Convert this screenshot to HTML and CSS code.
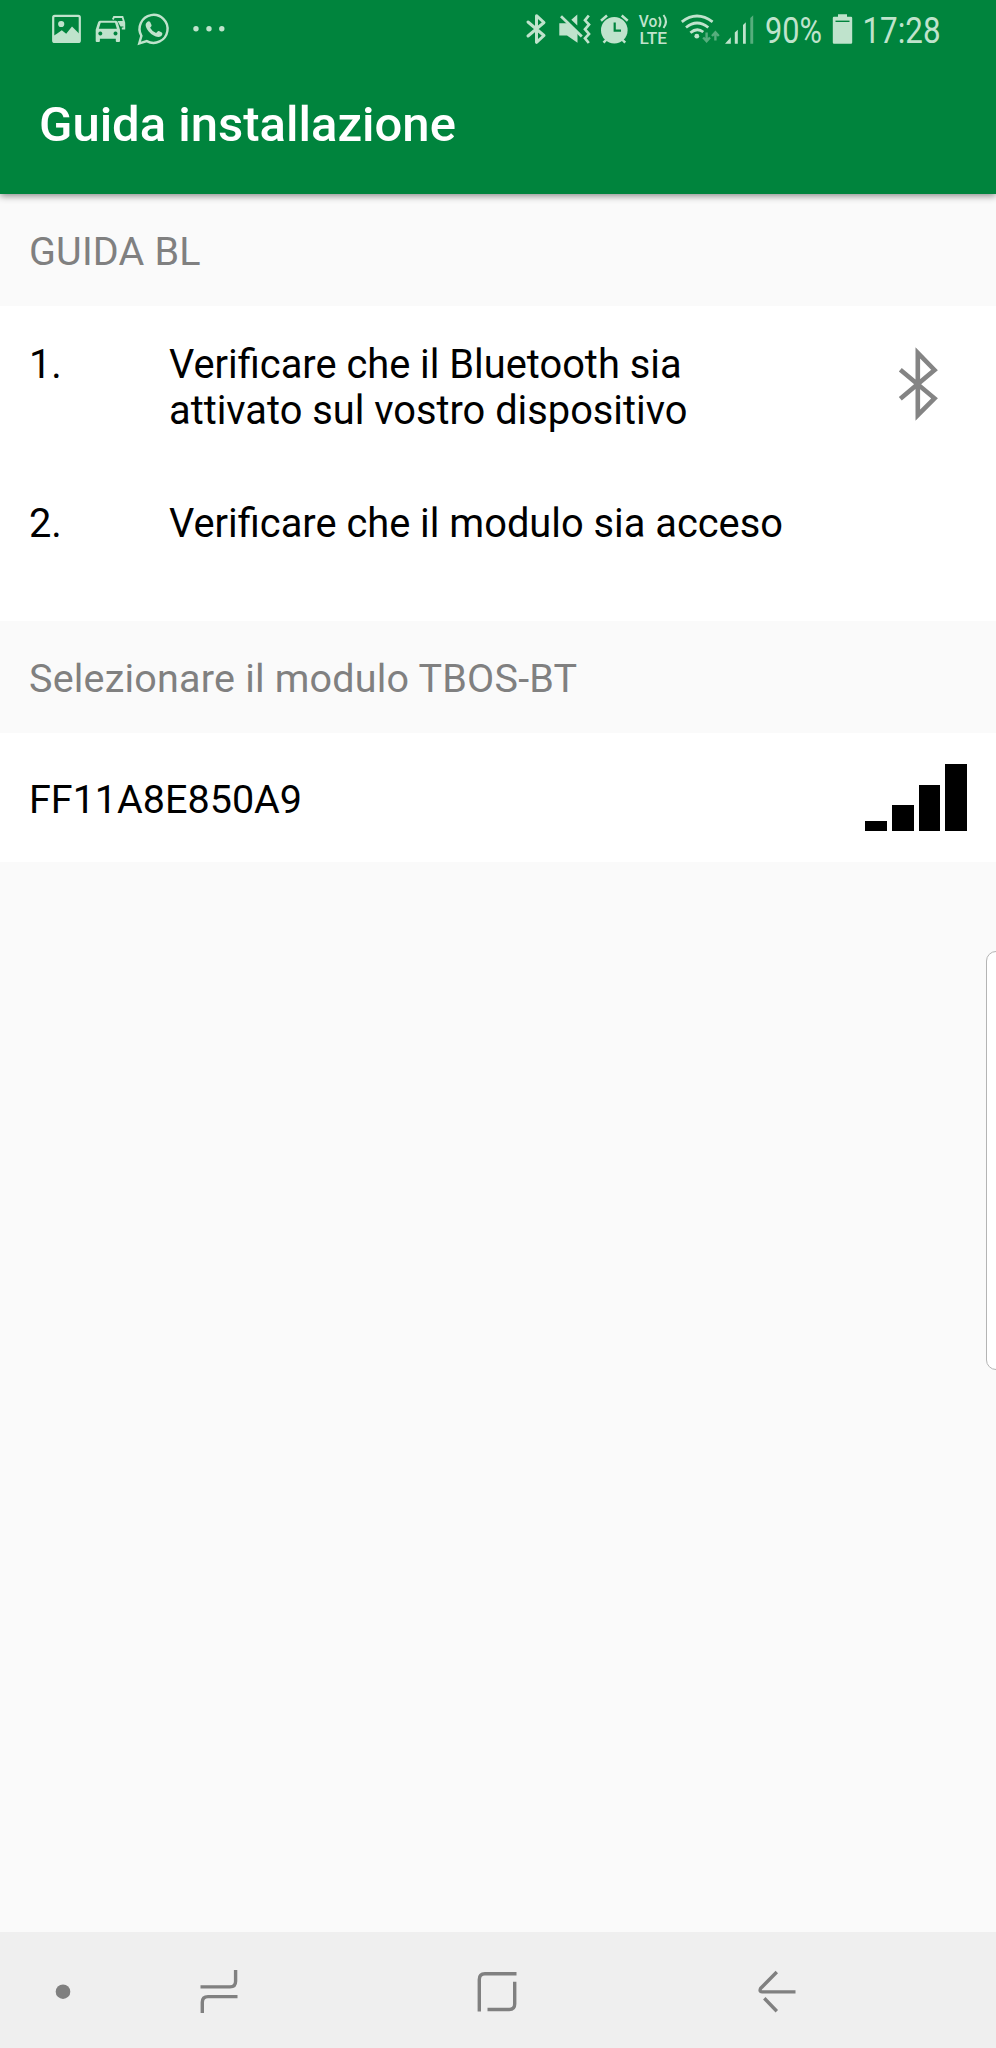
FILE: index.html
```html
<!DOCTYPE html>
<html lang="it">
<head>
  <meta charset="UTF-8">
  <meta name="viewport" content="width=device-width, initial-scale=1.0">
  <link rel="stylesheet" href="styles.css">
  <title>Guida installazione</title>
</head>
<body>
  <div class="phone">
    <header class="appbar">
      <div class="statusbar">
        <div class="notifications">
          <!-- gallery -->
          <svg width="40" height="60" viewBox="50 0 40 60">
            <rect class="line" x="53.2" y="15.9" width="26.6" height="26" rx="1.5" stroke-width="2.2"/>
            <circle class="fill" cx="61.2" cy="24" r="3.1"/>
            <path class="fill" d="M54 35.5l2.500-1.500 5.300-3.700 4.400 3.500 5.800-7.300 8 8V42H54z"/>
          </svg>
          <!-- traffic -->
          <svg width="42" height="60" viewBox="90 0 42 60">
            <path class="line" d="M112.800 19.500l1.200-2.500h8.500l1.800 6v5.500h-2.500" stroke-width="1.800"/>
            <path class="fill" d="M117.500 21h6.500v5.500h-3.500z"/>
            <path class="fill" fill-rule="evenodd" d="M100 20.700h15.800q1.400 0 1.900 1.500l2.300 7.500V41q0 1-1 1h-2.200q-1 0-1-1v-2.200H99.900V41q0 1-1 1h-2.200q-1 0-1-1V29.700l2.400-7.500q.5-1.500 1.900-1.500zM100.700 22.800l-1.900 6h18.100l-1.900-6zM100.300 31.500a2 2 0 1 0 .01 0zM115.500 31.500a2 2 0 1 0 .01 0z"/>
          </svg>
          <!-- whatsapp -->
          <svg width="43" height="60" viewBox="132 0 43 60">
            <path class="line" d="M139.200 43.500l2.200-7.700a14 14 0 1 1 5.400 5.300z" stroke-width="2.400"/>
            <path class="fill" d="M147.200 21.900q1-.9 2.200-.5.700.2 1 1l1.100 2.700q.3.700-.3 1.400l-1.100 1.300q2 3.700 6 5.300l1.500-1.700q.6-.6 1.300-.3l2.900 1.500q.8.500.5 1.600-.8 2.700-4 2.700-5.200-.3-9.800-5.700-3.600-4.600-2.700-7.400.4-1.100 1.400-1.900z"/>
          </svg>
          <svg width="60" height="60" viewBox="175 0 60 60">
            <circle class="fill" cx="196" cy="28.700" r="2.700"/>
            <circle class="fill" cx="209" cy="28.700" r="2.700"/>
            <circle class="fill" cx="221.800" cy="28.700" r="2.700"/>
          </svg>
        </div>
        <div class="system">
          <!-- bluetooth -->
          <svg width="35" height="60" viewBox="520 0 35 60">
            <path class="line round" d="M528 22l16 13.500-7.500 6.800V15.700l7.500 6.800L528 36" stroke-width="3"/>
          </svg>
          <!-- muted, vibration -->
          <svg width="41" height="60" viewBox="555 0 41 60">
            <path class="fill" d="M559.300 23.300h8L577.500 33v9.800L567 35.500h-7.700zM577.300 14.500v11l-6-5.800z"/>
            <path class="line" d="M561 16.200l20.800 20.300" stroke-width="2.800"/>
            <path class="line" d="M588.800 15.500l-3.800 4.800 4 4.300-4 4.700 4 4.700-4 4.300 3.800 4.700" stroke-width="2.700"/>
          </svg>
          <!-- alarm -->
          <svg width="40" height="60" viewBox="596 0 40 60">
            <circle class="fill" cx="614.300" cy="30.200" r="13.300"/>
            <path class="line" d="M601 20.800l6-5.300M621.700 15.500l6 5.300M603.500 42.700l4-4.200M625.200 42.700l-4-4.200" stroke-width="2.500"/>
            <path class="cut" d="M614.700 22.500v8.200h6.300"/>
          </svg>
          <!-- VoLTE -->
          <svg width="40" height="60" viewBox="636 0 40 60">
            <text class="lte" x="638.800" y="27.200" textLength="18.500" lengthAdjust="spacingAndGlyphs">Vo</text>
            <text class="lte" x="639.500" y="43.700" textLength="27.500" lengthAdjust="spacingAndGlyphs">LTE</text>
            <path class="line" d="M659 17q3 4.800 0 10M663.500 15q5 6.500 0 13" stroke-width="2"/>
          </svg>
          <!-- wifi -->
          <svg width="46" height="60" viewBox="676 0 46 60">
            <path class="line" d="M681.800 21.800q15-11.600 30.800 0M686 27.500q11-9 22.300 0M690.400 32.800q6.500-5.600 12.900-.8" stroke-width="2.800"/>
            <circle class="fill" cx="696.800" cy="36.200" r="2.400"/>
            <path class="line dim" d="M706.600 32.500v8.500M703.200 37.500l3.400 3.800 3.400-3.800M715.400 40.500v-8M712 36l3.400-3.800 3.400 3.800" stroke-width="2.400"/>
          </svg>
          <!-- mobile signal -->
          <svg width="40" height="60" viewBox="722 0 40 60">
            <path class="fill" d="M725 43.700l5.800-6.500v6.500zM734.800 43.700V32.500l3-2.800v14zM743 43.700V25l2.800-2.800v21.500z"/>
            <path class="fill dim" d="M750.300 43.700V18l2.900-2.700v28.400z"/>
          </svg>
          <svg width="66" height="60" viewBox="762 0 66 60">
            <text class="clock" x="765" y="43.300" textLength="57" lengthAdjust="spacingAndGlyphs">90%</text>
          </svg>
          <!-- battery -->
          <svg width="32" height="60" viewBox="828 0 32 60">
            <path class="fill" d="M838 14.300h9v2.500h4q1.200 0 1.200 1.200v24.500q0 1.200-1.200 1.200h-17q-1.200 0-1.200-1.200V18q0-1.200 1.200-1.200h4z"/>
            <path class="cut thin" d="M835.500 21.300h14"/>
          </svg>
          <svg width="90" height="60" viewBox="860 0 90 60">
            <text class="clock" x="862.500" y="43.300" textLength="78" lengthAdjust="spacingAndGlyphs">17:28</text>
          </svg>
        </div>
      </div>
      <h1>Guida installazione</h1>
    </header>

    <main>
      <h2>GUIDA BL</h2>
      <div class="steps">
        <div class="step">
          <span class="number">1.</span>
          <p>Verificare che il Bluetooth sia<br>attivato sul vostro dispositivo</p>
          <svg class="bluetooth" width="40" height="74" viewBox="898 347 40 74">
            <path d="M900.300 369.800l34.200 28.500-16.700 16.900V352.800l16.700 17.200-34.200 28.800"/>
          </svg>
        </div>
        <div class="step">
          <span class="number">2.</span>
          <p>Verificare che il modulo sia acceso</p>
        </div>
      </div>

      <h2>Selezionare il modulo TBOS-BT</h2>
      <div class="module">
        <span>FF11A8E850A9</span>
        <div class="bars">
          <i class="bar1"></i>
          <i class="bar2"></i>
          <i class="bar3"></i>
          <i class="bar4"></i>
        </div>
      </div>
    </main>

    <div class="edge"></div>

    <nav>
      <svg width="126" height="116" viewBox="0 1932 126 116">
        <circle cx="63" cy="1991.700" r="7.300"/>
      </svg>
      <svg width="186" height="116" viewBox="126 1932 186 116">
        <path d="M200.500 1986.900H230q5.600 0 5.600-5.600V1970M237.500 1996.600H208q-5.700 0-5.700 5.600V2013"/>
      </svg>
      <svg width="372" height="116" viewBox="312 1932 372 116">
        <path d="M479.300 2011.500V1979.500q0-5.800 5.600-5.800H516.500M514.700 1981.700V2004q0 5.500-5.400 5.500H487.500"/>
      </svg>
      <svg width="186" height="116" viewBox="684 1932 186 116">
        <path d="M776.800 1972L760.700 1988.300Q759 1991.900 762 1991.900H795.500M764.300 1998.300L776.800 2011.300"/>
      </svg>
    </nav>
  </div>
</body>
</html>
```

FILE: styles.css
```css
body{
  margin: 0;
  font-family: Roboto, sans-serif;
  background-color: #fafafa;
}
.phone{
  position: relative;
  display: flex;
  flex-direction: column;
  width: 996px;
  height: 2048px;
  overflow: hidden;
}
.appbar{
  height: 194px;
  background-color: #00843d;
  box-shadow: 0 2px 7px rgba(0, 0, 0, 0.45);
}
.statusbar{
  display: flex;
  justify-content: space-between;
  height: 60px;
  padding-left: 50px;
  padding-right: 46px;
}
.statusbar svg{
  overflow: visible;
}
.notifications, .system{
  display: flex;
}
.fill{
  fill: #bfe3cc;
}
.line{
  fill: none;
  stroke: #bfe3cc;
}
.round{
  stroke-linejoin: round;
  stroke-linecap: round;
}
.dim{
  opacity: 0.45;
}
.cut{
  fill: none;
  stroke: #00843d;
  stroke-width: 2.2;
}
.thin{
  stroke-width: 1.4;
}
.lte{
  fill: #bfe3cc;
  font-size: 16.5px;
  font-weight: 500;
}
.clock{
  fill: #bfe3cc;
  font-size: 36px;
}
h1{
  margin: 0;
  padding: 37px 0 0 39px;
  font-size: 49px;
  font-weight: 500;
  line-height: 56px;
  color: white;
}
main{
  flex: 1;
}
h2{
  height: 77px;
  margin: 0;
  padding: 35px 0 0 29px;
  font-size: 39.5px;
  font-weight: 400;
  line-height: 46px;
  letter-spacing: 0.2px;
  color: #808080;
}
.steps{
  display: flex;
  flex-direction: column;
  gap: 66px;
  height: 279px;
  padding: 36px 58px 0 29px;
  background-color: white;
}
.step{
  display: flex;
  font-size: 39.8px;
  line-height: 46.3px;
}
.number{
  width: 140px;
}
.step p{
  flex: 1;
  margin: 0;
}
.bluetooth{
  margin-top: 5px;
}
.bluetooth path{
  fill: none;
  stroke: #848484;
  stroke-width: 4.6;
}
.module{
  display: flex;
  justify-content: space-between;
  height: 98px;
  padding: 31px 29px 0 29px;
  font-size: 39.5px;
  background-color: white;
}
.module span{
  padding-top: 13px;
  line-height: 46px;
}
.bars{
  display: flex;
  align-items: flex-end;
  gap: 5px;
  height: 67px;
}
.bars i{
  width: 21.7px;
  background-color: black;
}
.bar1{
  height: 10px;
}
.bar2{
  height: 26px;
}
.bar3{
  height: 46px;
}
.bar4{
  height: 67px;
}
/* handle of the side panel, lies over the right border */
.edge{
  position: absolute;
  top: 951px;
  right: -10px;
  width: 18px;
  height: 417px;
  border: 1.5px solid #b4b4b4;
  border-radius: 14px;
  background-color: white;
}
nav{
  display: flex;
  height: 116px;
  background-color: #efefef;
}
nav path{
  fill: none;
  stroke: #808080;
  stroke-width: 3.4;
}
nav circle{
  fill: #808080;
}
```
